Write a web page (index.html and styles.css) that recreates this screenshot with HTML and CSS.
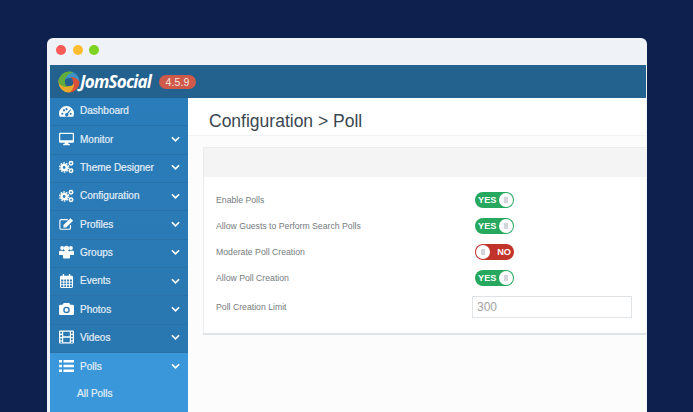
FILE: index.html
```html
<!DOCTYPE html>
<html lang="en">
<head>
  <meta charset="UTF-8">
  <meta name="viewport" content="width=device-width, initial-scale=1.0">
  <title>JomSocial - Configuration &gt; Poll</title>
  <link rel="stylesheet" href="styles.css">
</head>
<body>
  <div class="window">
    <div class="titlebar">
      <span class="dot dot-red"></span>
      <span class="dot dot-yellow"></span>
      <span class="dot dot-green"></span>
    </div>
    <div class="app">
      <header class="topbar">
        <svg class="logo" viewBox="0 0 24 24" width="22" height="22">
          <defs>
            <path id="blade" d="M12 0.500A11.500 11.500 0 0 1 23.500 12C23.500 14 23 15.500 22.200 17C22 12 18 7.500 12.500 7.500C9.500 7.500 7.500 9 6.500 10.500C6.500 6 8.500 2 12 0.500z"/>
          </defs>
          <use href="#blade" fill="#3a93c9"/>
          <use href="#blade" fill="#d8503a" transform="rotate(90 12 12)"/>
          <use href="#blade" fill="#e9a82c" transform="rotate(180 12 12)"/>
          <use href="#blade" fill="#62ab3d" transform="rotate(270 12 12)"/>
        </svg>
        <span class="brand">JomSocial</span>
        <span class="version">4.5.9</span>
      </header>
      <div class="body">
        <nav class="sidebar">
          <a class="nav-item">
            <svg class="nav-icon" viewBox="0 0 18 14"><path fill="#fff" fill-rule="evenodd" d="M9 1a9 9 0 0 0-9 9c0 1.500.4 2.800 1 4h16c.6-1.200 1-2.500 1-4a9 9 0 0 0-9-9zM4 9a1.300 1.300 0 1 1 0 2.600A1.300 1.300 0 0 1 4 9zm2-4a1.300 1.300 0 1 1 0 2.600A1.300 1.300 0 0 1 6 5zm3-1.500a1.300 1.300 0 1 1 0 2.600 1.300 1.300 0 0 1 0-2.600zM13.500 5l.9.8-3.500 4.500a2 2 0 1 1-1.200-.8zM14 9a1.300 1.300 0 1 1 0 2.600A1.300 1.300 0 0 1 14 9z"/></svg>
            <span class="nav-label">Dashboard</span>
          </a>
          <a class="nav-item">
            <svg class="nav-icon" viewBox="0 0 18 15"><path fill="#fff" fill-rule="evenodd" d="M1.500 0h15A1.500 1.500 0 0 1 18 1.500v9a1.500 1.500 0 0 1-1.500 1.500H11l.5 1.500h1.500v1.500H5v-1.500h1.500L7 12H1.500A1.500 1.500 0 0 1 0 10.500v-9A1.500 1.500 0 0 1 1.500 0zM1.500 1.500v7.500h15V1.500z"/></svg>
            <span class="nav-label">Monitor</span>
            <svg class="chevron" viewBox="0 0 10 6"><path d="M1 1l4 4 4-4" fill="none" stroke="#fff" stroke-width="1.800"/></svg>
          </a>
          <a class="nav-item">
            <svg class="nav-icon" viewBox="0 0 16 14"><g fill="none" stroke="#fff"><circle cx="5.500" cy="7.500" r="2.800" stroke-width="2.600"/><circle cx="5.500" cy="7.500" r="4.800" stroke-width="1.400" stroke-dasharray="1.800 1.200"/><circle cx="12.800" cy="3" r="1.800" stroke-width="1.700"/><circle cx="12.800" cy="11" r="1.800" stroke-width="1.700"/></g></svg>
            <span class="nav-label">Theme Designer</span>
            <svg class="chevron" viewBox="0 0 10 6"><path d="M1 1l4 4 4-4" fill="none" stroke="#fff" stroke-width="1.800"/></svg>
          </a>
          <a class="nav-item">
            <svg class="nav-icon" viewBox="0 0 16 14"><g fill="none" stroke="#fff"><circle cx="5.500" cy="7.500" r="2.800" stroke-width="2.600"/><circle cx="5.500" cy="7.500" r="4.800" stroke-width="1.400" stroke-dasharray="1.800 1.200"/><circle cx="12.800" cy="3" r="1.800" stroke-width="1.700"/><circle cx="12.800" cy="11" r="1.800" stroke-width="1.700"/></g></svg>
            <span class="nav-label">Configuration</span>
            <svg class="chevron" viewBox="0 0 10 6"><path d="M1 1l4 4 4-4" fill="none" stroke="#fff" stroke-width="1.800"/></svg>
          </a>
          <a class="nav-item">
            <svg class="nav-icon" viewBox="0 0 17 14"><path d="M13 8v3.500a1.500 1.500 0 0 1-1.500 1.500h-9A1.500 1.500 0 0 1 1 11.500v-8A1.500 1.500 0 0 1 2.500 2H10" fill="none" stroke="#fff" stroke-width="1.300"/><path fill="#fff" d="M5 8l8-7.500 3 2.800L8 11H5z"/></svg>
            <span class="nav-label">Profiles</span>
            <svg class="chevron" viewBox="0 0 10 6"><path d="M1 1l4 4 4-4" fill="none" stroke="#fff" stroke-width="1.800"/></svg>
          </a>
          <a class="nav-item">
            <svg class="nav-icon" viewBox="0 0 17 15"><g fill="#fff"><circle cx="3.500" cy="3" r="2.200"/><circle cx="13.500" cy="3" r="2.200"/><circle cx="8.500" cy="3.500" r="3"/><path d="M0 10V7.500C0 6.500.8 6 1.500 6h3v5H1a1 1 0 0 1-1-1zM17 10V7.500c0-1-.8-1.500-1.500-1.500h-3v5H16a1 1 0 0 0 1-1z"/><path d="M4.500 8c0-1 .8-1.500 1.500-1.500h5c.7 0 1.500.5 1.500 1.500v5.500c0 1-.8 1.500-1.500 1.500H6c-.7 0-1.500-.5-1.500-1.500z"/></g></svg>
            <span class="nav-label">Groups</span>
            <svg class="chevron" viewBox="0 0 10 6"><path d="M1 1l4 4 4-4" fill="none" stroke="#fff" stroke-width="1.800"/></svg>
          </a>
          <a class="nav-item">
            <svg class="nav-icon" viewBox="0 0 14 15"><path fill="#fff" fill-rule="evenodd" d="M3 0h1.500v2h5V0H11v2h1.500A1.500 1.500 0 0 1 14 3.500v10a1.500 1.500 0 0 1-1.500 1.500h-11A1.500 1.500 0 0 1 0 13.500v-10A1.500 1.500 0 0 1 1.500 2H3zM1.200 6v2h2.400V6zm3.400 0v2h2V6zm3 0v2h2V6zm3 0v2h2.200V6zM1.200 9v2h2.400V9zm3.400 0v2h2V9zm3 0v2h2V9zm3 0v2h2.200V9zM1.200 12v1.800h2.400V12zm3.400 0v1.800h2V12zm3 0v1.800h2V12zm3 0v1.800h2.200V12z"/></svg>
            <span class="nav-label">Events</span>
            <svg class="chevron" viewBox="0 0 10 6"><path d="M1 1l4 4 4-4" fill="none" stroke="#fff" stroke-width="1.800"/></svg>
          </a>
          <a class="nav-item">
            <svg class="nav-icon" viewBox="0 0 16 13"><path fill="#fff" fill-rule="evenodd" d="M5 0h6l1 2h2.500A1.500 1.500 0 0 1 16 3.500v8a1.500 1.500 0 0 1-1.500 1.500h-13A1.500 1.500 0 0 1 0 11.500v-8A1.500 1.500 0 0 1 1.500 2H4zM8 4a3.500 3.500 0 1 0 0 7 3.500 3.500 0 0 0 0-7zm0 1.500a2 2 0 1 1 0 4 2 2 0 0 1 0-4z"/></svg>
            <span class="nav-label">Photos</span>
            <svg class="chevron" viewBox="0 0 10 6"><path d="M1 1l4 4 4-4" fill="none" stroke="#fff" stroke-width="1.800"/></svg>
          </a>
          <a class="nav-item">
            <svg class="nav-icon" viewBox="0 0 15 13"><path fill="#fff" fill-rule="evenodd" d="M1 0h13a1 1 0 0 1 1 1v11a1 1 0 0 1-1 1H1a1 1 0 0 1-1-1V1a1 1 0 0 1 1-1zm.3 1.300v2h1.700v-2zm0 3.200v2h1.700v-2zm0 3.200v2h1.700v-2zm0 3.200v1.300h1.700v-1.300zM4.200 1.300v4.500h6.600V1.300zm0 5.900v4.500h6.600V7.200zM12 1.300v2h1.700v-2zm0 3.200v2h1.700v-2zm0 3.200v2h1.700v-2zm0 3.200v1.300h1.700v-1.300z"/></svg>
            <span class="nav-label">Videos</span>
            <svg class="chevron" viewBox="0 0 10 6"><path d="M1 1l4 4 4-4" fill="none" stroke="#fff" stroke-width="1.800"/></svg>
          </a>
          <a class="nav-item nav-item-active">
            <svg class="nav-icon" viewBox="0 0 15 12"><path fill="#fff" d="M0 0h3v2.500H0zM4.500 0H15v2.500H4.500zM0 4.700h3v2.500H0zM4.500 4.700H15v2.500H4.500zM0 9.500h3V12H0zM4.500 9.500H15V12H4.500z"/></svg>
            <span class="nav-label">Polls</span>
            <svg class="chevron" viewBox="0 0 10 6"><path d="M1 1l4 4 4-4" fill="none" stroke="#fff" stroke-width="1.800"/></svg>
          </a>
          <div class="subnav">
            <a class="subnav-item">All Polls</a>
          </div>
        </nav>
        <main class="content">
          <h1 class="page-title">Configuration &gt; Poll</h1>
          <section class="panel">
            <div class="panel-head"></div>
            <div class="panel-body">
              <div class="row"><label>Enable Polls</label><span class="toggle toggle-on"><b>YES</b><i></i></span></div>
              <div class="row"><label>Allow Guests to Perform Search Polls</label><span class="toggle toggle-on"><b>YES</b><i></i></span></div>
              <div class="row"><label>Moderate Poll Creation</label><span class="toggle toggle-off"><i></i><b>NO</b></span></div>
              <div class="row"><label>Allow Poll Creation</label><span class="toggle toggle-on"><b>YES</b><i></i></span></div>
              <div class="row row-input"><label>Poll Creation Limit</label><input class="text-input" type="text" placeholder="300"></div>
            </div>
          </section>
        </main>
      </div>
    </div>
  </div>
</body>
</html>
```

FILE: styles.css
```css
html, body {
  height: 100%;
}

body {
  margin: 0;
  overflow: hidden;
  background-color: #0e204e;
  font-family: "Liberation Sans", Arial, sans-serif;
}

.window {
  width: 600px;
  height: 374px;
  margin: 38px 0 0 47px;
  background-color: #eff2f6;
  border-radius: 6px 6px 0 0;
  overflow: hidden;
  display: flex;
  flex-direction: column;
}

.titlebar {
  height: 24px;
  padding-left: 9px;
  display: flex;
  align-items: center;
  gap: 6.700px;
  flex-shrink: 0;
}

.dot {
  width: 10px;
  height: 10px;
  border-radius: 50%;
}

.dot-red { background-color: #fc5b57; }
.dot-yellow { background-color: #fdbd2e; }
.dot-green { background-color: #7ed321; }

.app {
  flex: 1;
  margin: 3px 1px 0 3px;
  display: flex;
  flex-direction: column;
  min-height: 0;
}

.topbar {
  height: 33px;
  background-color: #23618f;
  display: flex;
  align-items: center;
  padding-left: 8px;
  flex-shrink: 0;
}

.logo {
  flex-shrink: 0;
}

.brand {
  width: 79px;
  font-family: "Open Sans", sans-serif;
  font-size: 17px;
  font-style: italic;
  font-weight: 700;
  letter-spacing: -0.8px;
  color: #fff;
}

.version {
  padding: 1px 6.500px;
  background-color: #cf5a4a;
  border-radius: 7px;
  font-size: 10.500px;
  line-height: 12px;
  letter-spacing: 0.1px;
  color: #f3e6e3;
}

.body {
  flex: 1;
  display: flex;
  min-height: 0;
}

.sidebar {
  width: 138px;
  flex-shrink: 0;
  background: linear-gradient(180deg, #2a7dba 0%, #2976ae 100%);
}

.nav-item {
  height: 28.350px;
  box-sizing: border-box;
  display: flex;
  align-items: center;
  padding: 0 8px 2px 9px;
  font-size: 10px;
  color: #e3eef7;
  -webkit-text-stroke: 0.2px #e3eef7;
  border-bottom: 1px solid #2872a8;
}

.nav-icon {
  width: 15px;
  height: 14px;
  flex-shrink: 0;
}

.nav-label {
  margin-left: 6px;
  flex: 1;
}

.chevron {
  width: 9px;
  height: 6px;
}

.nav-item-active {
  background-color: #3a98da;
  border-bottom: 0;
}

.subnav {
  background-color: #3a98da;
  height: 60px;
}

.subnav-item {
  display: block;
  padding: 7px 0 0 27px;
  font-size: 10px;
  color: #e3eef7;
  -webkit-text-stroke: 0.2px #e3eef7;
}

.content {
  flex: 1;
  min-width: 0;
  background-color: #fcfcfc;
}

.page-title {
  margin: 0;
  height: 38px;
  box-sizing: border-box;
  padding: 13px 0 0 21px;
  background-color: #fff;
  border-bottom: 1px solid #f2f3f4;
  font-size: 17.500px;
  line-height: 20px;
  font-weight: normal;
  color: #3a4650;
}

.panel {
  margin: 11px 0 0 15px;
  background-color: #fff;
  border: 1px solid #e9ecee;
  border-right: 0;
  border-bottom: 2px solid #dfe3e6;
}

.panel-head {
  height: 29px;
  background-color: #f4f4f4;
}

.panel-body {
  padding: 10px 14px 10px 12px;
}

.row {
  display: flex;
  align-items: center;
  height: 26px;
}

.row label {
  width: 259px;
  font-size: 8.700px;
  color: #767b80;
}

.row-input {
  height: 32px;
}

.row-input label {
  width: 256px;
}

.toggle {
  width: 39px;
  height: 16px;
  border-radius: 8px;
  display: flex;
  align-items: center;
  justify-content: space-between;
  box-sizing: border-box;
  padding: 0 1px 0 3px;
  color: #fff;
  font-size: 9.200px;
}

.toggle b {
  padding-bottom: 1px;
}

.toggle i {
  width: 14px;
  height: 14px;
  border-radius: 50%;
  background: #fff linear-gradient(#d3d4dc, #d3d4dc) center / 4px 6px no-repeat;
}

.toggle-on {
  background-color: #27a85f;
}

.toggle-off {
  background-color: #c0342c;
  padding: 0 3px 0 1px;
}

.text-input {
  width: 160px;
  height: 22px;
  box-sizing: border-box;
  padding: 0 4px;
  border: 1px solid #dfe3e6;
  font-family: "Liberation Sans", Arial, sans-serif;
  font-size: 12px;
}

.text-input::placeholder {
  color: #a2a2a2;
  opacity: 1;
}
```
